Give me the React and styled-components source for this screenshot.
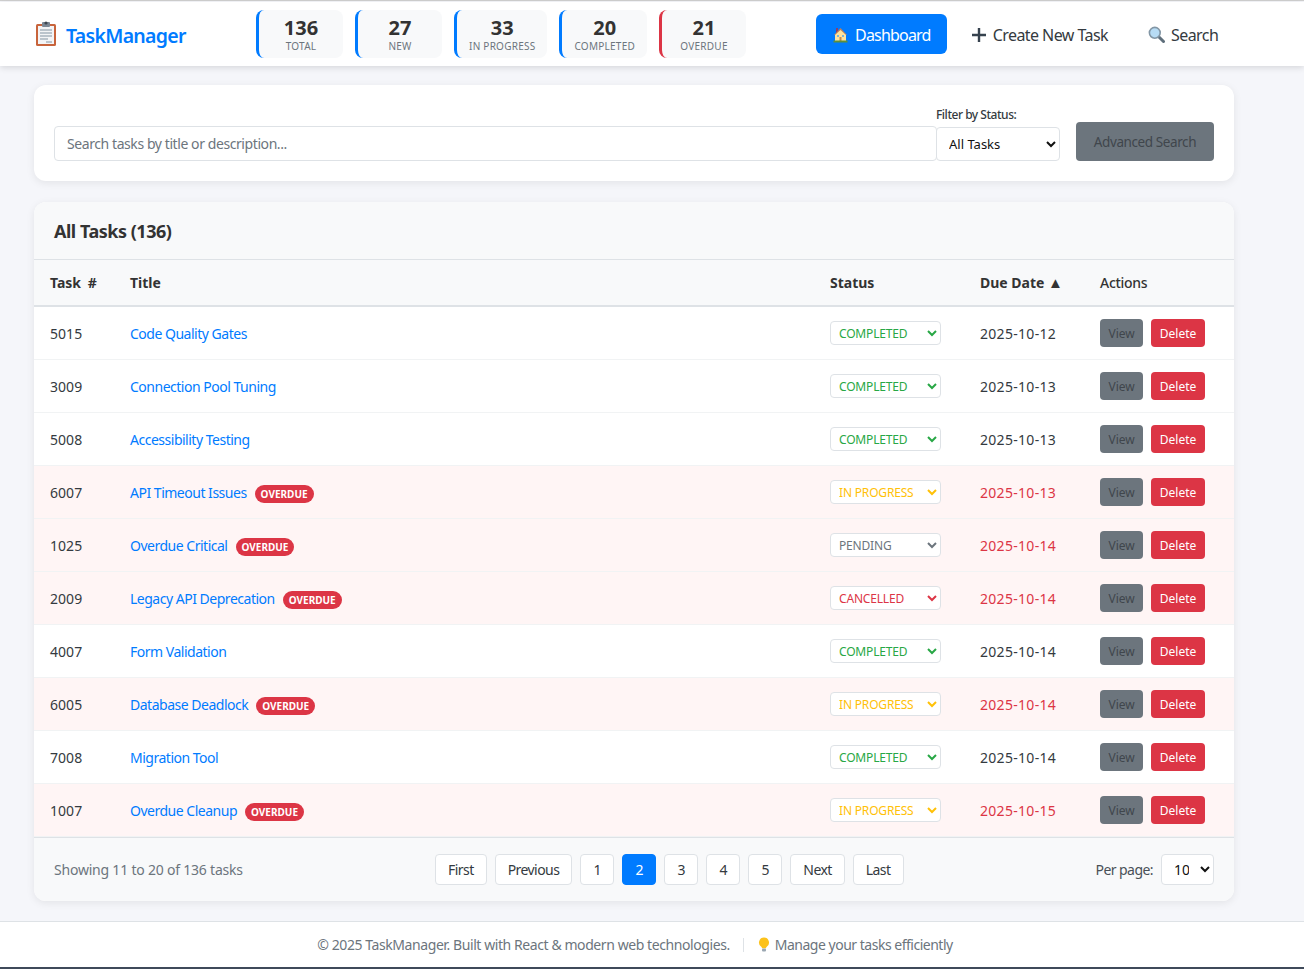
import styled, { createGlobalStyle } from "styled-components";

const primary = "#007bff";
const danger = "#dc3545";
const grey = "#6c757d";
const border = "#dee2e6";
const dark = "#343a40";

const GlobalStyle = createGlobalStyle`
  * { box-sizing: border-box; }
  html, body { margin: 0; padding: 0; }
  body {
    background: #f5f6fa;
    font-family: "Noto Sans", "Open Sans", "Liberation Sans", sans-serif;
    color: ${dark};
    letter-spacing: -0.03em;
  }
`;

const Page = styled.div`
  min-height: 969px;
  display: flex;
  flex-direction: column;
  border-top: 1px solid #cfcfcf;
  border-bottom: 2px solid #3f4a5a;
  padding-top: 1px;
  background: #f5f6fa;
`;

const Header = styled.header`
  height: 64px;
  background: #fff;
  box-shadow: 0 2px 6px rgba(0, 0, 0, 0.12);
  display: flex;
  align-items: center;
  padding-left: 34px;
  position: relative;
`;

const Logo = styled.div`
  width: 222px;
  display: flex;
  align-items: center;
  gap: 8px;
  color: ${primary};
`;

const LogoText = styled.span`
  padding-top: 3px;
  font-size: 19.5px;
  font-weight: 600;
  letter-spacing: -0.7px;
`;

const Stats = styled.div`
  display: flex;
  gap: 12px;
  width: 560px;
`;

const Stat = styled.div`
  height: 48px;
  min-width: 87px;
  padding: 0 12px;
  background: #f8f9fa;
  border-left: 3px solid ${(p) => (p.$alert ? danger : primary)};
  border-radius: 8px;
  display: flex;
  flex-direction: column;
  align-items: center;
  justify-content: center;
`;

const StatNumber = styled.span`
  font-size: 20px;
  line-height: 24px;
  font-weight: 700;
  letter-spacing: 0;
  color: #333;
`;

const StatLabel = styled.span`
  font-size: 10px;
  line-height: 12px;
  letter-spacing: 0.25px;
  color: ${grey};
  text-transform: uppercase;
`;

const Nav = styled.nav`
  display: flex;
  align-items: center;
  gap: 8px;
`;

const NavLink = styled.a`
  height: 40px;
  padding: 1px 16px 0;
  border-radius: 6px;
  display: flex;
  align-items: center;
  gap: 6px;
  font-size: 16px;
  letter-spacing: ${(p) => (p.$active ? "-0.05em" : "-0.035em")};
  background: ${(p) => (p.$active ? primary : "transparent")};
  color: ${(p) => (p.$active ? "#fff" : dark)};
`;

const Main = styled.main`
  flex: 1;
  width: 1200px;
  margin-left: 34px;
  padding-top: 19px;
  display: flex;
  flex-direction: column;
  gap: 21px;
`;

const FilterCard = styled.section`
  height: 96px;
  background: #fff;
  border-radius: 12px;
  box-shadow: 0 2px 8px rgba(0, 0, 0, 0.08);
  padding: 0 20px 20px;
  display: flex;
  align-items: flex-end;
`;

const SearchInput = styled.input`
  flex: 1;
  height: 35px;
  padding: 0 12px;
  border: 1px solid ${border};
  border-radius: 4px;
  font: inherit;
  font-size: 14px;
  letter-spacing: -0.03em;
  background: #fff;
  margin-right: -1px;
  &::placeholder { color: ${grey}; }
`;

const FilterGroup = styled.div`
  display: flex;
  flex-direction: column;
  gap: 4px;
  position: relative;
`;

const FilterLabel = styled.label`
  font-size: 12px;
  line-height: 16px;
  font-weight: 500;
  color: ${dark};
`;

const FilterSelect = styled.select`
  width: 124px;
  height: 34px;
  padding: 0 8px;
  border: 1px solid ${border};
  border-radius: 4px;
  background: #fff;
  font: inherit;
  font-size: 13px;
  color: #111;
`;

const AdvancedButton = styled.button`
  width: 138px;
  height: 39px;
  margin-left: 16px;
  background: ${grey};
  border: none;
  border-radius: 4px;
  font: inherit;
  font-size: 13.5px;
  letter-spacing: -0.03em;
  color: #40464c;
`;

const TableCard = styled.section`
  background: #fff;
  border-radius: 12px;
  box-shadow: 0 2px 8px rgba(0, 0, 0, 0.08);
  overflow: hidden;
`;

const CardTitle = styled.h2`
  margin: 0;
  height: 58px;
  padding: 0 20px;
  display: flex;
  align-items: center;
  background: #f8f9fa;
  border-bottom: 1px solid ${border};
  font-size: 18px;
  font-weight: 700;
  color: #333;
`;

const Table = styled.table`
  width: 100%;
  border-collapse: collapse;
  table-layout: fixed;
`;

const HeadRow = styled.tr`
  height: 46px;
  background: #f8f9fa;
  border-bottom: 2px solid ${border};
`;

const HeadCell = styled.th`
  padding: 0 16px;
  text-align: left;
  font-size: 14px;
  font-weight: ${(p) => (p.$light ? 500 : 700)};
  letter-spacing: ${(p) => (p.$light ? "-0.02em" : "0")};
  word-spacing: ${(p) => p.$wordGap || 0}px;
  white-space: nowrap;
  color: #333;
`;

const SortArrow = styled.span`
  font-size: 15px;
  line-height: 14px;
  letter-spacing: 0;
`;

const Row = styled.tr`
  height: 53px;
  background: ${(p) => (p.$overdue ? "#fff5f5" : "#fff")};
  border-bottom: 1px solid #f1f3f4;
`;

const Cell = styled.td`
  padding: 0 16px;
  font-size: 14px;
  color: ${dark};
`;

const TextCell = styled(Cell)`
  padding-top: 2px;
`;

const IdCell = styled(TextCell)`
  letter-spacing: 0.05px;
`;

const DueCell = styled(TextCell)`
  letter-spacing: 0.3px;
  color: ${(p) => (p.$alert ? danger : dark)};
`;

const TitleWrap = styled.div`
  display: flex;
  align-items: center;
  gap: 8px;
`;

const TaskLink = styled.a`
  color: ${primary};
  font-size: 14px;
  letter-spacing: -0.035em;
`;

const OverdueBadge = styled.span`
  margin-top: 2px;
  padding: 0 6px;
  height: 18px;
  line-height: 18px;
  border-radius: 10px;
  background: ${danger};
  color: #fff;
  font-size: 10px;
  font-weight: 700;
  letter-spacing: 0;
`;

const statusColors = {
  COMPLETED: "#28a745",
  "IN PROGRESS": "#ffc107",
  PENDING: grey,
  CANCELLED: danger,
};

const StatusSelect = styled.select`
  display: block;
  width: 111px;
  height: 24px;
  padding: 1px 4px 0;
  border: 1px solid ${border};
  border-radius: 4px;
  background: #fff;
  font: inherit;
  font-size: 12px;
  letter-spacing: -0.015em;
  color: ${(p) => statusColors[p.value]};
`;

const Actions = styled.div`
  display: flex;
  gap: 8px;
`;

const ActionButton = styled.button`
  height: 28px;
  padding: 1px 8.5px 0;
  border: none;
  border-radius: 4px;
  font: inherit;
  font-size: 12px;
  background: ${(p) => (p.$danger ? danger : grey)};
  color: ${(p) => (p.$danger ? "#fff" : "#40464c")};
`;

const Pagination = styled.div`
  height: 64px;
  padding: 0 20px;
  background: #f8f9fa;
  border-top: 1px solid ${border};
  display: grid;
  grid-template-columns: 381px auto 1fr;
  align-items: center;
`;

const Showing = styled.span`
  font-size: 14px;
  letter-spacing: -0.015em;
  color: ${grey};
`;

const Pages = styled.div`
  display: flex;
  gap: 8px;
`;

const PageButton = styled.button`
  height: 31px;
  min-width: 34px;
  padding: 0 12px;
  border: 1px solid ${(p) => (p.$active ? primary : border)};
  border-radius: 4px;
  background: ${(p) => (p.$active ? primary : "#fff")};
  color: ${(p) => (p.$active ? "#fff" : dark)};
  font: inherit;
  font-size: 14px;
  letter-spacing: -0.04em;
`;

const PerPage = styled.label`
  justify-self: end;
  display: flex;
  align-items: center;
  gap: 8px;
  font-size: 14px;
  letter-spacing: -0.04em;
  color: #495057;
`;

const PerPageSelect = styled.select`
  width: 53px;
  height: 31px;
  padding: 0 8px;
  border: 1px solid ${border};
  border-radius: 4px;
  background: #fff;
  font: inherit;
  font-size: 14px;
  color: #111;
`;

const Footer = styled.footer`
  height: 46px;
  margin-top: 20px;
  background: #fff;
  border-top: 1px solid ${border};
  display: flex;
  align-items: center;
  justify-content: center;
  gap: 13px;
  padding-right: 34px;
  font-size: 14px;
  letter-spacing: -0.03em;
  color: ${grey};
`;

const FooterDivider = styled.span`
  width: 1px;
  height: 14px;
  background: ${border};
`;

const FooterTip = styled.span`
  display: flex;
  align-items: center;
  gap: 4px;
  letter-spacing: -0.035em;
`;

const ClipboardIcon = () => (
  <svg width="24" height="26" viewBox="0 0 24 26">
    <rect x="2" y="3" width="20" height="22" rx="1.5" fill="#c8643c" />
    <rect x="4" y="5" width="16" height="18" fill="#f3f4f6" />
    <rect x="8" y="1" width="8" height="5" rx="1" fill="#7b8794" />
    <circle cx="12" cy="2" r="1.6" fill="#3d4650" />
    <path d="M6 9h12M6 12h12M6 15h12M6 18h8M12 21h6" stroke="#a9b4be" strokeWidth="1.6" />
  </svg>
);

const HouseIcon = () => (
  <svg width="17" height="16" viewBox="0 0 17 16">
    <rect x="4" y="1" width="2" height="5" fill="#8a3f6d" />
    <path d="M8.5 1 15 8H2z" fill="#b9805a" />
    <path d="M3 8l5.5-5 5.5 5v6H3z" fill="#ffe39e" />
    <rect x="5" y="8" width="2" height="2" fill="#7fb6d9" />
    <rect x="10" y="8" width="2" height="2" fill="#7fb6d9" />
    <rect x="7.5" y="10" width="2" height="4" fill="#c58a4a" />
    <rect x="1.5" y="13.5" width="14" height="2" fill="#5e8f3a" />
  </svg>
);

const PlusIcon = () => (
  <svg width="16" height="16" viewBox="0 0 16 16">
    <path d="M8 1v14M1 8h14" stroke="#36424e" strokeWidth="2.4" />
  </svg>
);

const SearchIcon = () => (
  <svg width="17" height="18" viewBox="0 0 17 18">
    <path d="M10.5 10.5 15.5 15.5" stroke="#5f6f7c" strokeWidth="3" strokeLinecap="round" />
    <circle cx="6.8" cy="6.8" r="5.4" fill="#b7dcf5" stroke="#8296a5" strokeWidth="1.6" />
  </svg>
);

const BulbIcon = () => (
  <svg width="14" height="15" viewBox="0 0 14 15">
    <path d="M7 0.5a5 5 0 0 0-3 9c.6.5 1 1 1 1.8h4c0-.8.4-1.3 1-1.8a5 5 0 0 0-3-9z" fill="#fcc21b" />
    <rect x="5" y="11.5" width="4" height="3" rx="1" fill="#9aa7b2" />
  </svg>
);

const stats = [
  { value: 136, label: "Total" },
  { value: 27, label: "New" },
  { value: 33, label: "In Progress" },
  { value: 20, label: "Completed" },
  { value: 21, label: "Overdue", alert: true },
];

const tasks = [
  { id: 5015, title: "Code Quality Gates", status: "COMPLETED", due: "2025-10-12" },
  { id: 3009, title: "Connection Pool Tuning", status: "COMPLETED", due: "2025-10-13" },
  { id: 5008, title: "Accessibility Testing", status: "COMPLETED", due: "2025-10-13" },
  { id: 6007, title: "API Timeout Issues", status: "IN PROGRESS", due: "2025-10-13", overdue: true },
  { id: 1025, title: "Overdue Critical", status: "PENDING", due: "2025-10-14", overdue: true },
  { id: 2009, title: "Legacy API Deprecation", status: "CANCELLED", due: "2025-10-14", overdue: true },
  { id: 4007, title: "Form Validation", status: "COMPLETED", due: "2025-10-14" },
  { id: 6005, title: "Database Deadlock", status: "IN PROGRESS", due: "2025-10-14", overdue: true },
  { id: 7008, title: "Migration Tool", status: "COMPLETED", due: "2025-10-14" },
  { id: 1007, title: "Overdue Cleanup", status: "IN PROGRESS", due: "2025-10-15", overdue: true },
];

const pageLabels = ["First", "Previous", "1", "2", "3", "4", "5", "Next", "Last"];

const App = () => {
  return (
    <Page>
      <GlobalStyle />
      <Header>
        <Logo>
          <ClipboardIcon />
          <LogoText>TaskManager</LogoText>
        </Logo>
        <Stats>
          {stats.map((s) => (
            <Stat key={s.label} $alert={s.alert}>
              <StatNumber>{s.value}</StatNumber>
              <StatLabel>{s.label}</StatLabel>
            </Stat>
          ))}
        </Stats>
        <Nav>
          <NavLink $active>
            <HouseIcon />
            Dashboard
          </NavLink>
          <NavLink>
            <PlusIcon />
            Create New Task
          </NavLink>
          <NavLink>
            <SearchIcon />
            Search
          </NavLink>
        </Nav>
      </Header>
      <Main>
        <FilterCard>
          <SearchInput placeholder="Search tasks by title or description..." />
          <FilterGroup>
            <FilterLabel>Filter by Status:</FilterLabel>
            <FilterSelect defaultValue="All Tasks">
              <option>All Tasks</option>
            </FilterSelect>
          </FilterGroup>
          <AdvancedButton>Advanced Search</AdvancedButton>
        </FilterCard>
        <TableCard>
          <CardTitle>All Tasks (136)</CardTitle>
          <Table>
            <colgroup>
              <col width="80" />
              <col width="700" />
              <col width="150" />
              <col width="120" />
              <col width="150" />
            </colgroup>
            <thead>
              <HeadRow>
                <HeadCell $wordGap={3}>Task #</HeadCell>
                <HeadCell>Title</HeadCell>
                <HeadCell>Status</HeadCell>
                <HeadCell>
                  Due Date <SortArrow>▲</SortArrow>
                </HeadCell>
                <HeadCell $light>Actions</HeadCell>
              </HeadRow>
            </thead>
            <tbody>
              {tasks.map((t) => (
                <Row key={t.id} $overdue={t.overdue}>
                  <IdCell>{t.id}</IdCell>
                  <TextCell>
                    <TitleWrap>
                      <TaskLink>{t.title}</TaskLink>
                      {t.overdue && <OverdueBadge>OVERDUE</OverdueBadge>}
                    </TitleWrap>
                  </TextCell>
                  <Cell>
                    <StatusSelect value={t.status} onChange={() => {}}>
                      <option>{t.status}</option>
                    </StatusSelect>
                  </Cell>
                  <DueCell $alert={t.overdue}>{t.due}</DueCell>
                  <Cell>
                    <Actions>
                      <ActionButton>View</ActionButton>
                      <ActionButton $danger>Delete</ActionButton>
                    </Actions>
                  </Cell>
                </Row>
              ))}
            </tbody>
          </Table>
          <Pagination>
            <Showing>Showing 11 to 20 of 136 tasks</Showing>
            <Pages>
              {pageLabels.map((label) => (
                <PageButton key={label} $active={label === "2"}>
                  {label}
                </PageButton>
              ))}
            </Pages>
            <PerPage>
              Per page:
              <PerPageSelect defaultValue="10">
                <option>10</option>
              </PerPageSelect>
            </PerPage>
          </Pagination>
        </TableCard>
      </Main>
      <Footer>
        <span>© 2025 TaskManager. Built with React &amp; modern web technologies.</span>
        <FooterDivider />
        <FooterTip>
          <BulbIcon />
          Manage your tasks efficiently
        </FooterTip>
      </Footer>
    </Page>
  );
};

export default App;
